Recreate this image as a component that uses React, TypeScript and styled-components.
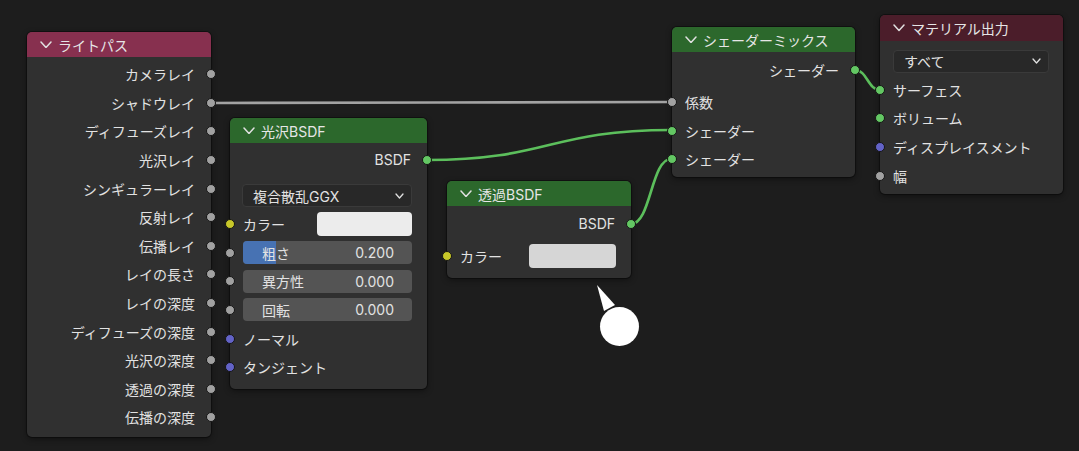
import React from "react";
import styled, { createGlobalStyle } from "styled-components";

const ROW = 28.6;

const GlobalStyle = createGlobalStyle`
  html, body { margin: 0; padding: 0; background: #1d1d1d; }
  body { font-family: "Inter", "Noto Sans CJK JP", sans-serif; }
`;

const Canvas = styled.div`
  position: relative;
  width: 1079px;
  height: 451px;
  overflow: hidden;
  background: #1d1d1d;
  font-family: "Inter", "Noto Sans CJK JP", sans-serif;
  font-size: 14px;
  color: #e2e2e2;
`;

const Links = styled.svg`
  position: absolute;
  left: 0;
  top: 0;
  width: 1079px;
  height: 451px;
`;

const NodeBox = styled.div<{ $x: number; $y: number; $w: number }>`
  position: absolute;
  left: ${(p) => p.$x}px;
  top: ${(p) => p.$y}px;
  width: ${(p) => p.$w}px;
  background: #303030;
  border-radius: 5px;
  box-shadow: 0 0 0 1px rgba(0, 0, 0, 0.35), 0 2px 6px rgba(0, 0, 0, 0.45);
  display: flex;
  flex-direction: column;
`;

const Header = styled.div<{ $bg: string; $h?: number }>`
  height: ${(p) => p.$h ?? 25}px;
  background: ${(p) => p.$bg};
  border-radius: 5px 5px 0 0;
  display: flex;
  align-items: center;
  gap: 6px;
  padding-left: 13px;
  font-size: 14px;
  color: #e6e6e6;
  white-space: nowrap;
`;

const Body = styled.div<{ $pt: number; $pb: number }>`
  display: flex;
  flex-direction: column;
  padding: ${(p) => p.$pt}px 0 ${(p) => p.$pb}px;
`;

const Row = styled.div<{ $out?: boolean }>`
  position: relative;
  height: ${ROW}px;
  display: flex;
  align-items: center;
  justify-content: ${(p) => (p.$out ? "flex-end" : "flex-start")};
  padding: ${(p) => (p.$out ? "0 16px 0 13px" : "0 15px 0 13px")};
  white-space: nowrap;
`;

const Spacer = styled.div<{ $h: number }>`
  height: ${(p) => p.$h}px;
`;

const Socket = styled.span<{ $c: string; $out?: boolean }>`
  position: absolute;
  top: 50%;
  ${(p) => (p.$out ? "right: -5px;" : "left: -5px;")}
  width: 10px;
  height: 10px;
  box-sizing: border-box;
  margin-top: -5px;
  border-radius: 50%;
  background: ${(p) => p.$c};
  border: 1px solid #151515;
`;

const Dropdown = styled.div<{ $ml: number; $mr: number }>`
  flex: 1;
  height: 23px;
  margin: 0 ${(p) => p.$mr - 15}px 0 ${(p) => p.$ml - 13}px;
  box-sizing: border-box;
  background: #282828;
  border: 1px solid #3a3a3a;
  border-radius: 4px;
  display: flex;
  align-items: center;
  justify-content: space-between;
  padding: 0 7px 0 10px;
`;

const Swatch = styled.div<{ $w: number; $c: string }>`
  margin-left: auto;
  width: ${(p) => p.$w}px;
  height: 24px;
  border-radius: 4px;
  background: ${(p) => p.$c};
`;

const Slider = styled.div`
  position: relative;
  flex: 1;
  height: 23px;
  border-radius: 4px;
  background: #545454;
  overflow: hidden;
  display: flex;
  align-items: center;
  justify-content: space-between;
  padding: 0 18px 0 19px;
`;

const SliderFill = styled.div<{ $pct: number }>`
  position: absolute;
  left: 0;
  top: 0;
  bottom: 0;
  width: ${(p) => p.$pct}%;
  background: #4772b3;
`;

const SliderText = styled.span`
  position: relative;
`;

const Chevron = ({ w = 10, h = 5.5, c = "#e0e0e0", sw = 1.5 }: { w?: number; h?: number; c?: string; sw?: number }) => (
  <svg width={w + 2} height={h + 2} viewBox={`-1 -1 ${w + 2} ${h + 2}`}>
    <polyline points={`0,0 ${w / 2},${h} ${w},0`} fill="none" stroke={c} strokeWidth={sw} strokeLinecap="round" strokeLinejoin="round" />
  </svg>
);

const GREY = "#a1a1a1";
const GREEN = "#63c763";
const YELLOW = "#c7c729";
const PURPLE = "#6363c7";
const LINK_GREEN = "#5cbf5c";

const lightOutputs = [
  "カメラレイ",
  "シャドウレイ",
  "ディフューズレイ",
  "光沢レイ",
  "シンギュラーレイ",
  "反射レイ",
  "伝播レイ",
  "レイの長さ",
  "レイの深度",
  "ディフューズの深度",
  "光沢の深度",
  "透過の深度",
  "伝播の深度",
];

const sliders = [
  { label: "粗さ", value: "0.200", pct: 19.5 },
  { label: "異方性", value: "0.000", pct: 0 },
  { label: "回転", value: "0.000", pct: 0 },
];

export default function App() {
  return (
    <>
      <GlobalStyle />
      <Canvas>
        <Links viewBox="0 0 1079 451">
          <path d="M211,103 C441,103 441,102 671,102" stroke="#a3a3a3" strokeWidth={2.6} fill="none" />
          <path d="M427,160 C549,160 549,130 671,130" stroke={LINK_GREEN} strokeWidth={2.6} fill="none" />
          <path d="M631,224 C651,224 651,159 671,159" stroke={LINK_GREEN} strokeWidth={2.6} fill="none" />
          <path d="M855,70 C867,70 868,90 880,90" stroke={LINK_GREEN} strokeWidth={2.6} fill="none" />
        </Links>

        {/* ライトパス */}
        <NodeBox $x={27} $y={32} $w={184}>
          <Header $bg="#87304f">
            <Chevron />
            <span>ライトパス</span>
          </Header>
          <Body $pt={3} $pb={5}>
            {lightOutputs.map((l) => (
              <Row $out key={l}>
                {l}
                <Socket $out $c={GREY} />
              </Row>
            ))}
          </Body>
        </NodeBox>

        {/* 光沢BSDF */}
        <NodeBox $x={230} $y={118} $w={197}>
          <Header $bg="#2c682c">
            <Chevron />
            <span>光沢BSDF</span>
          </Header>
          <Body $pt={2.7} $pb={7.5}>
            <Row $out>
              BSDF
              <Socket $out $c={GREEN} />
            </Row>
            <Spacer $h={7} />
            <Row>
              <Dropdown $ml={12} $mr={15}>
                <span>複合散乱GGX</span>
                <Chevron w={7} h={4} sw={1.3} />
              </Dropdown>
            </Row>
            <Row>
              <Socket $c={YELLOW} />
              カラー
              <Swatch $w={95} $c="#ececec" />
            </Row>
            {sliders.map((s) => (
              <Row key={s.label}>
                <Socket $c={GREY} />
                <Slider>
                  <SliderFill $pct={s.pct} />
                  <SliderText>{s.label}</SliderText>
                  <SliderText>{s.value}</SliderText>
                </Slider>
              </Row>
            ))}
            <Row>
              <Socket $c={PURPLE} />
              ノーマル
            </Row>
            <Row>
              <Socket $c={PURPLE} />
              タンジェント
            </Row>
          </Body>
        </NodeBox>

        {/* 透過BSDF */}
        <NodeBox $x={447} $y={181} $w={184}>
          <Header $bg="#2c682c">
            <Chevron />
            <span>透過BSDF</span>
          </Header>
          <Body $pt={3.7} $pb={7.7}>
            <Row $out>
              BSDF
              <Socket $out $c={GREEN} />
            </Row>
            <Spacer $h={3.4} />
            <Row>
              <Socket $c={YELLOW} />
              カラー
              <Swatch $w={87} $c="#d6d6d6" />
            </Row>
          </Body>
        </NodeBox>

        {/* シェーダーミックス */}
        <NodeBox $x={672} $y={27} $w={183}>
          <Header $bg="#2c682c">
            <Chevron />
            <span>シェーダーミックス</span>
          </Header>
          <Body $pt={3.7} $pb={3.5}>
            <Row $out>
              シェーダー
              <Socket $out $c={GREEN} />
            </Row>
            <Spacer $h={3.4} />
            <Row>
              <Socket $c={GREY} />
              係数
            </Row>
            <Row>
              <Socket $c={GREEN} />
              シェーダー
            </Row>
            <Row>
              <Socket $c={GREEN} />
              シェーダー
            </Row>
          </Body>
        </NodeBox>

        {/* マテリアル出力 */}
        <NodeBox $x={880} $y={15} $w={183}>
          <Header $bg="#4b1d2a" $h={26}>
            <Chevron />
            <span>マテリアル出力</span>
          </Header>
          <Body $pt={6} $pb={4}>
            <Row>
              <Dropdown $ml={13} $mr={14}>
                <span>すべて</span>
                <Chevron w={7} h={4} sw={1.3} />
              </Dropdown>
            </Row>
            <Row>
              <Socket $c={GREEN} />
              サーフェス
            </Row>
            <Row>
              <Socket $c={GREEN} />
              ボリューム
            </Row>
            <Row>
              <Socket $c={PURPLE} />
              ディスプレイスメント
            </Row>
            <Row>
              <Socket $c={GREY} />
              幅
            </Row>
          </Body>
        </NodeBox>

        {/* ポインター吹き出し */}
        <Links viewBox="0 0 1079 451">
          <polygon points="597,285 604,311 615,305" fill="#ffffff" />
          <circle cx={619.5} cy={326.5} r={19.5} fill="#ffffff" />
        </Links>
      </Canvas>
    </>
  );
}
